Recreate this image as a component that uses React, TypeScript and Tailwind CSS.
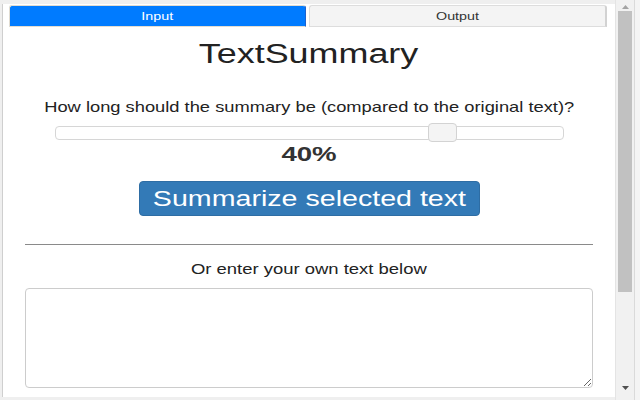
export default function App() {
  return (
    <div className="flex h-[400px] w-[640px] overflow-hidden bg-[#efefef] font-['Liberation_Sans',Arial,sans-serif] text-[#333]">
      <div className="mb-[3px] ml-[2px] mt-[4px] flex min-w-0 flex-1 flex-col border-l border-[#cfcfcf] bg-white">
        <div className="flex gap-[3px] pl-[6px] pr-[8px] pt-[1px]">
          <div className="flex h-[22px] flex-1 items-center justify-center rounded-t-[3px] border border-[#e2ddd2] border-r-[#1c62cf] bg-[#007bff] text-[11px] text-white">
            <span className="inline-block scale-x-[1.3]">Input</span>
          </div>
          <div className="flex h-[22px] flex-1 items-center justify-center rounded-t-[3px] border border-[#dddddd] border-r-2 border-r-[#d2d2d2] bg-[#f4f4f4] text-[11px] text-[#333]">
            <span className="inline-block scale-x-[1.3]">Output</span>
          </div>
        </div>

        <h1 className="mt-[12px] h-[30px] text-center text-[27px] leading-[30px] text-[#222]">
          <span className="inline-block scale-x-[1.33]">TextSummary</span>
        </h1>

        <p className="mt-[28px] h-[20px] text-center text-[15px] leading-[20px] text-[#222]">
          <span className="inline-block scale-x-[1.22]">
            How long should the summary be (compared to the original text)?
          </span>
        </p>

        <div className="relative mx-auto mt-[6px] flex h-[19px] w-[509px] items-center">
          <div className="h-[14px] w-full rounded-[4px] border border-[#d6d6d6] bg-white" />
          <div className="absolute left-[373px] top-0 h-[19px] w-[29px] rounded-[4px] border border-[#d3d3d3] bg-[#f4f4f4]" />
        </div>

        <div className="h-[24px] text-center text-[20px] font-bold leading-[24px] text-[#333]">
          <span className="inline-block scale-x-[1.38]">40%</span>
        </div>

        <button className="mx-auto mt-[15px] flex h-[35px] w-[341px] items-center justify-center rounded-[4px] border border-[#2e6da4] bg-[#337ab7] text-[22px] leading-[26px] text-white">
          <span className="inline-block scale-x-[1.3]">Summarize selected text</span>
        </button>

        <div className="mx-[22px] mt-[28px] border-t border-[#8a8a8a]" />

        <p className="mt-[14px] h-[20px] text-center text-[15px] leading-[20px] text-[#222]">
          <span className="inline-block scale-x-[1.23]">Or enter your own text below</span>
        </p>

        <textarea className="mx-[22px] mt-[9px] h-[100px] rounded-[4px] border border-[#cccccc] bg-white outline-none" />
      </div>

      <div className="flex w-[19px] flex-col border-l border-[#e4e4e4] bg-[#f1f1f1]">
        <div className="flex h-[11px] items-center justify-center pt-[2px]">
          <svg width="7" height="4" viewBox="0 0 7 4">
            <polygon points="0,4 7,4 3.5,0" fill="#a3a3a3" />
          </svg>
        </div>
        <div className="mx-[2px] h-[281px] bg-[#c1c1c1]" />
        <div className="flex-1" />
        <div className="flex h-[14px] items-start justify-center">
          <svg width="7" height="4" viewBox="0 0 7 4">
            <polygon points="0,0 7,0 3.5,4" fill="#505050" />
          </svg>
        </div>
      </div>
      <div className="w-[6px] border-l border-[#dadada] bg-[#f4f4f4]" />
    </div>
  );
}
